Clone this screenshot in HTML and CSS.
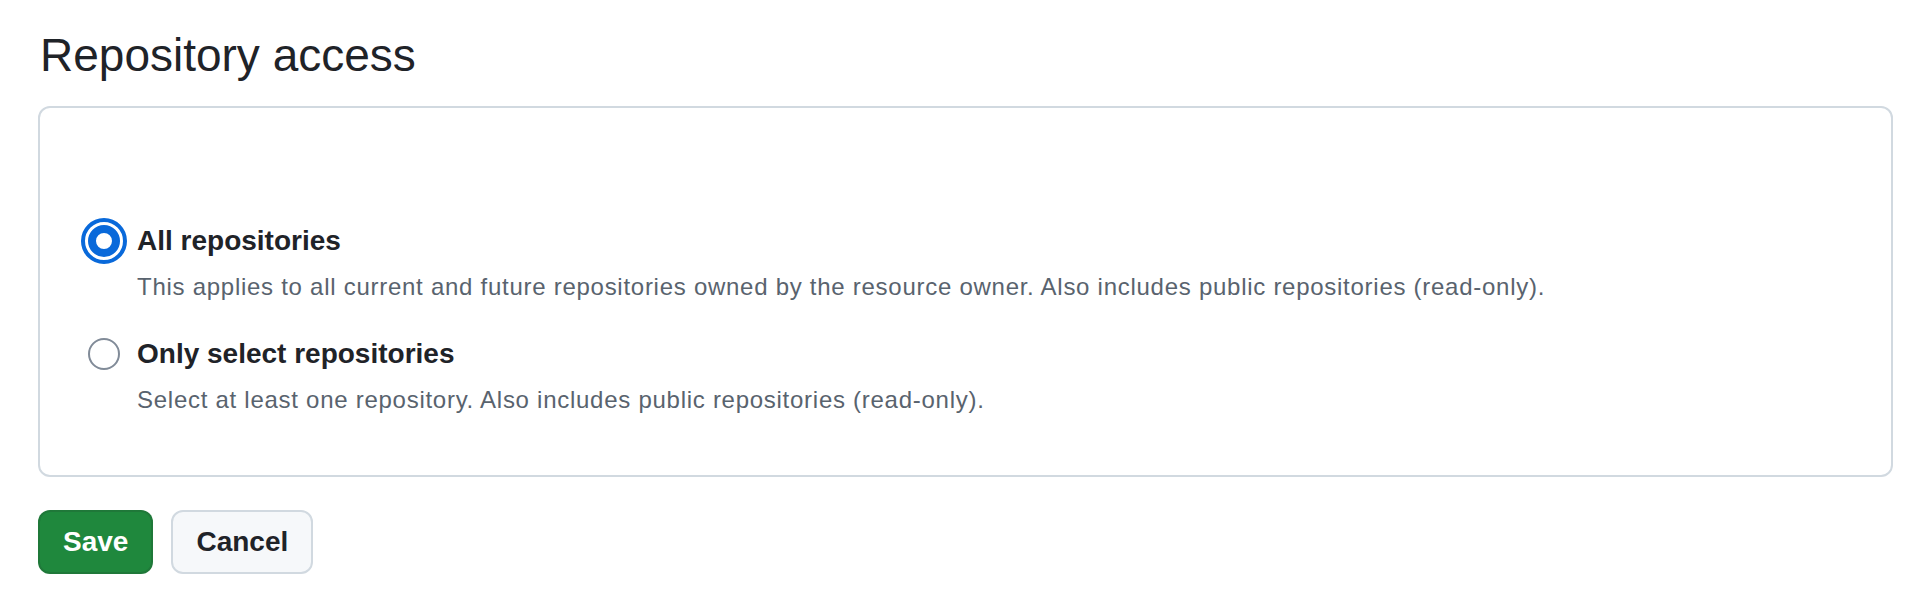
FILE: index.html
```html
<!DOCTYPE html>
<html lang="en">
<head>
<meta charset="utf-8">
<title>Repository access</title>
<link rel="stylesheet" href="styles.css">
</head>
<body>
<main class="page">
  <h2 class="subhead">Repository access</h2>
  <div class="box">
    <div class="radio-group">
      <label class="radio-item">
        <input class="radio" type="radio" name="access" checked>
        <span class="radio-text">
          <span class="radio-label">All repositories</span>
          <span class="radio-caption">This applies to all current and future repositories owned by the resource owner. Also includes public repositories (read-only).</span>
        </span>
      </label>
      <label class="radio-item">
        <input class="radio" type="radio" name="access">
        <span class="radio-text">
          <span class="radio-label">Only select repositories</span>
          <span class="radio-caption">Select at least one repository. Also includes public repositories (read-only).</span>
        </span>
      </label>
    </div>
  </div>
  <div class="actions">
    <button class="btn btn-primary" type="button">Save</button>
    <button class="btn btn-default" type="button">Cancel</button>
  </div>
</main>
</body>
</html>
```
FILE: styles.css
```css
* { box-sizing: border-box; }

html, body {
  margin: 0;
  padding: 0;
  background: #ffffff;
}

body {
  font-family: "Liberation Sans", Arial, sans-serif;
  color: #1f2328;
}

.page {
  padding: 21px 31px 0 38px;
}

.subhead {
  margin: 0 0 16px 0;
  padding-left: 2px;
  font-size: 46px;
  line-height: 69px;
  font-weight: 400;
  color: #1f2328;
}

.box {
  border: 2px solid #d1d9e0;
  border-radius: 12px;
  padding: 113px 48px 57px 48px;
  min-height: 371px;
}

.radio-group {
  display: flex;
  flex-direction: column;
  gap: 29px;
}

.radio-item {
  display: flex;
  align-items: flex-start;
  gap: 17px;
  cursor: pointer;
}

.radio {
  appearance: none;
  -webkit-appearance: none;
  margin: 4px 0 0 0;
  width: 32px;
  height: 32px;
  flex: 0 0 32px;
  border-radius: 50%;
  border: 2px solid #818b98;
  background: #ffffff;
}

.radio:checked {
  border: 8px solid #0969da;
  outline: 4px solid #0969da;
  outline-offset: 3px;
}

.radio-text {
  display: flex;
  flex-direction: column;
  gap: 8px;
}

.radio-label {
  font-size: 28px;
  line-height: 40px;
  font-weight: 700;
  color: #1f2328;
}

.radio-caption {
  font-size: 24px;
  line-height: 36px;
  letter-spacing: 0.73px;
  color: #59636e;
}

.actions {
  display: flex;
  gap: 18px;
  margin-top: 33px;
}

.btn {
  height: 64px;
  padding: 0 23px;
  border-radius: 12px;
  font-family: "Liberation Sans", Arial, sans-serif;
  font-size: 28px;
  font-weight: 700;
  line-height: 60px;
  cursor: pointer;
}

.btn-primary {
  background: #1f883d;
  color: #ffffff;
  border: 2px solid rgba(31, 35, 40, 0.15);
}

.btn-default {
  background: #f6f8fa;
  color: #1f2328;
  border: 2px solid #d1d9e0;
}
```
